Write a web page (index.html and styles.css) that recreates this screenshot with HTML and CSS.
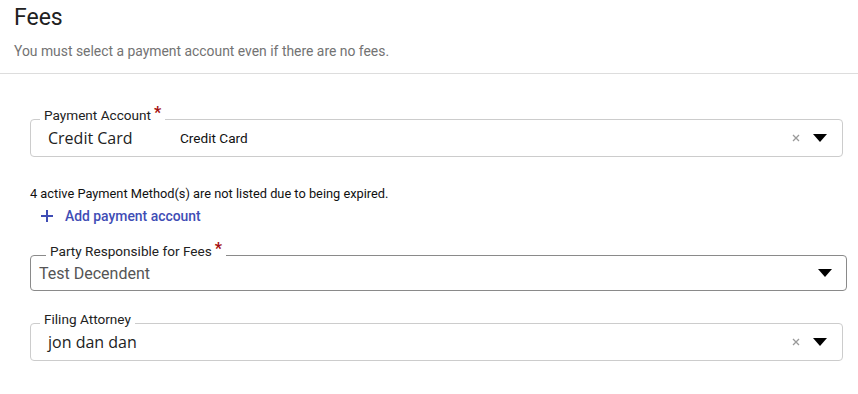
FILE: index.html
```html
<!DOCTYPE html>
<html lang="en">
<head>
    <meta charset="UTF-8">
    <meta name="viewport" content="width=device-width, initial-scale=1.0">
    <title>Fees</title>
    <link rel="stylesheet" href="styles.css">
</head>
<body>
    <div class="header">
        <h1>Fees</h1>
        <p class="subtitle">You must select a payment account even if there are no fees.</p>
    </div>

    <div class="content">
        <div class="select-box">
            <span class="select-label">Payment Account<span class="req">*</span></span>
            <div class="select-value">
                <span class="value-main">Credit Card</span>
                <span class="value-sub">Credit Card</span>
            </div>
            <span class="clear-icon">
                <svg width="8" height="8" viewBox="0 0 8 8"><path d="M1 1L7 7M7 1L1 7" stroke="#9a9a9a" stroke-width="1.3"/></svg>
            </span>
            <span class="arrow-icon">
                <svg width="14" height="8" viewBox="0 0 14 8"><path d="M0 0H14L7 8Z" fill="#000"/></svg>
            </span>
        </div>

        <p class="note">4 active Payment Method(s) are not listed due to being expired.</p>
        <a class="add-link" href="#">
            <svg width="12" height="12" viewBox="0 0 12 12"><path d="M6 0V12M0 6H12" stroke="#3f4db5" stroke-width="2"/></svg>
            <span>Add payment account</span>
        </a>

        <div class="select-box party">
            <span class="select-label">Party Responsible for Fees<span class="req">*</span></span>
            <div class="select-value">
                <span class="value-plain">Test Decendent</span>
            </div>
            <span class="arrow-icon">
                <svg width="14" height="8" viewBox="0 0 14 8"><path d="M0 0H14L7 8Z" fill="#000"/></svg>
            </span>
        </div>

        <div class="select-box attorney">
            <span class="select-label">Filing Attorney</span>
            <div class="select-value">
                <span class="value-main">jon dan dan</span>
            </div>
            <span class="clear-icon">
                <svg width="8" height="8" viewBox="0 0 8 8"><path d="M1 1L7 7M7 1L1 7" stroke="#9a9a9a" stroke-width="1.3"/></svg>
            </span>
            <span class="arrow-icon">
                <svg width="14" height="8" viewBox="0 0 14 8"><path d="M0 0H14L7 8Z" fill="#000"/></svg>
            </span>
        </div>
    </div>
</body>
</html>
```
FILE: styles.css
```css
body {
    margin: 0;
    font-family: Roboto, "Liberation Sans", sans-serif;
    color: #212121;
    background: #ffffff;
}
.header {
    padding: 5px 14px 14px;
    border-bottom: 1px solid #dddddd;
}
.header h1 {
    margin: 0;
    font-size: 23px;
    line-height: 26px;
    font-weight: 400;
    color: #212121;
}
.subtitle {
    margin: 12px 0 0;
    font-size: 13.9px;
    line-height: 16px;
    color: #737373;
}
.content {
    padding: 45px 15px 0 30px;
}
.select-box {
    position: relative;
    display: flex;
    align-items: center;
    height: 38px;
    box-sizing: border-box;
    border: 1px solid #cccccc;
    border-radius: 4px;
    padding: 0 15px 0 17px;
}
.select-label {
    position: absolute;
    top: -13px;
    left: 9px;
    padding: 0 4px;
    background: #ffffff;
    font-size: 13.6px;
    line-height: 16px;
    color: #222222;
}
.req {
    color: #a50e0e;
    font-size: 16px;
    font-weight: 700;
    margin-left: 3px;
    position: relative;
    top: -2px;
}
.select-value {
    flex: 1;
    display: flex;
    align-items: center;
}
.value-main {
    width: 132px;
    font-family: "Open Sans", sans-serif;
    font-size: 16px;
    color: #222222;
}
.value-sub {
    font-size: 13.6px;
    color: #111111;
}
.value-plain {
    font-size: 16px;
    color: #555555;
}
.clear-icon {
    display: flex;
    margin-right: 13px;
}
.arrow-icon {
    display: flex;
}
.note {
    margin: 30px 0 0;
    font-size: 12.8px;
    line-height: 14px;
    color: #111111;
}
.add-link {
    display: flex;
    align-items: center;
    gap: 12px;
    margin: 7px 0 0 11px;
    font-size: 13.9px;
    line-height: 16px;
    font-weight: 500;
    color: #3f4db5;
    text-decoration: none;
}
.select-box.party {
    margin: 31px -4px 0 0;
    height: 36px;
    border-color: #8a8a8a;
    padding: 0 14px 0 8px;
}
.select-box.party .select-label {
    left: 15px;
}
.select-box.attorney {
    margin-top: 32px;
}
```
